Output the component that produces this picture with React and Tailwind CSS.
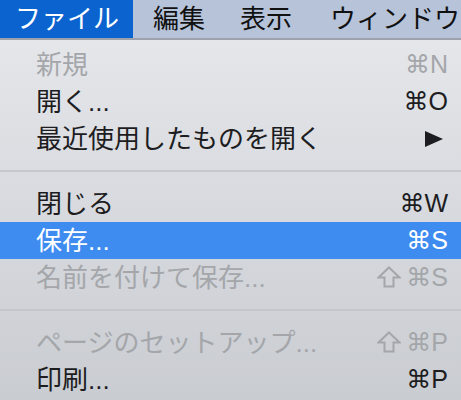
import React from "react";

const JP = { fontFamily: '"Liberation Sans", "Noto Sans CJK JP", sans-serif' };
const SC = { fontFamily: '"Liberation Sans", "DejaVu Sans", "Noto Sans CJK JP", sans-serif' };

function Shift({ color }) {
  return (
    <svg width="24" height="22" viewBox="0 0 24 22" className="mr-[5px] mb-[1px]">
      <path d="M12 1.5 L22.5 11.5 L16.5 11.5 L16.5 20.5 L7.5 20.5 L7.5 11.5 L1.5 11.5 Z" fill="none" stroke={color} strokeWidth="2" strokeLinejoin="miter" />
    </svg>
  );
}

function Item({ label, shortcut, shift, disabled, active, arrow }) {
  const color = active ? "text-white" : disabled ? "text-[#a4a6aa]" : "text-[#1d1d1f]";
  return (
    <div className={`h-[37px] flex items-center pl-[36px] pr-[13px] ${active ? "bg-[#3e8cf0]" : ""} ${color}`}>
      <span className="flex-1 text-[26px] leading-none" style={JP}>{label}</span>
      {shift && <Shift color={disabled ? "#a4a6aa" : "#1d1d1f"} />}
      {shortcut && (
        <span className="text-[25px] leading-none" style={SC}>{shortcut}</span>
      )}
      {arrow && (
        <svg width="18" height="16" viewBox="0 0 18 16" className="mr-[5px]">
          <path d="M0 0 L18 8 L0 16 Z" fill="#1d1d1f" />
        </svg>
      )}
    </div>
  );
}

function Sep() {
  return (
    <div className="h-[28px] flex items-center">
      <div className="h-[2px] w-full bg-[#c5c7cc]" />
    </div>
  );
}

export default function App() {
  return (
    <div className="w-[461px] h-[400px] overflow-hidden" style={JP}>
      <div className="h-[38px] bg-[#b6c3d9] flex items-center text-[26px] leading-none text-[#111]">
        <div className="h-full w-[133px] bg-[#0b63d0] text-white flex items-center pl-[15px]">ファイル</div>
        <div className="pl-[20px]">編集</div>
        <div className="pl-[35px]">表示</div>
        <div className="pl-[38px] whitespace-nowrap">ウィンドウ</div>
      </div>
      <div className="h-[2px] bg-[#9ea3ab]" />
      <div className="h-[360px] bg-gradient-to-b from-[#e4e6ea] to-[#c9ccd1] pt-[6px]">
        <Item label="新規" shortcut="⌘N" disabled />
        <Item label="開く..." shortcut="⌘O" />
        <Item label="最近使用したものを開く" arrow />
        <Sep />
        <Item label="閉じる" shortcut="⌘W" />
        <Item label="保存..." shortcut="⌘S" active />
        <Item label="名前を付けて保存..." shortcut="⌘S" shift disabled />
        <Sep />
        <Item label="ページのセットアップ..." shortcut="⌘P" shift disabled />
        <Item label="印刷..." shortcut="⌘P" />
      </div>
    </div>
  );
}
